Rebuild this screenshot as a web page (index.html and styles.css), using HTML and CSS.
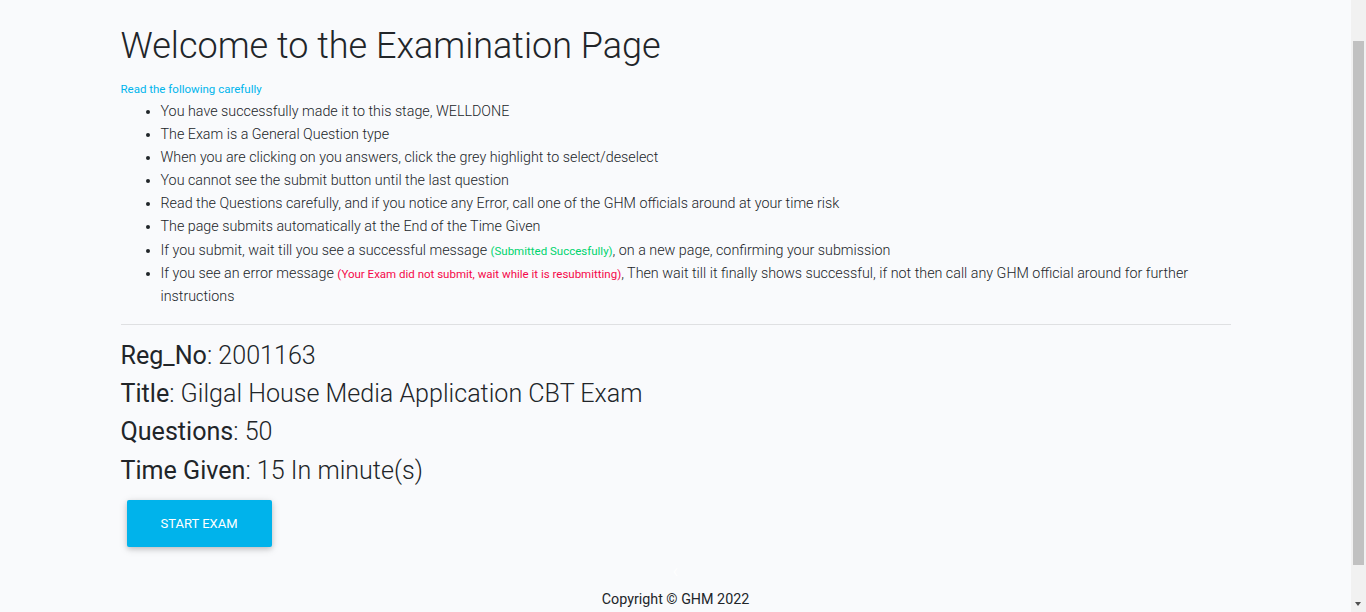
FILE: index.html
```html
<!DOCTYPE html>
<html lang="en">
<head>
<meta charset="utf-8">
<title>Examination Page</title>
<link rel="stylesheet" href="styles.css">
</head>
<body>
<main class="container">
  <h1 class="title">Welcome to the Examination Page</h1>
  <p class="note">Read the following carefully</p>
  <ul class="rules">
    <li>You have successfully made it to this stage, WELLDONE</li>
    <li>The Exam is a General Question type</li>
    <li>When you are clicking on you answers, click the grey highlight to select/deselect</li>
    <li>You cannot see the submit button until the last question</li>
    <li>Read the Questions carefully, and if you notice any Error, call one of the GHM officials around at your time risk</li>
    <li>The page submits automatically at the End of the Time Given</li>
    <li>If you submit, wait till you see a successful message <span class="ok">(Submitted Succesfully)</span>, on a new page, confirming your submission</li>
    <li>If you see an error message <span class="err">(Your Exam did not submit, wait while it is resubmitting)</span>, Then wait till it finally shows successful, if not then call any GHM official around for further instructions</li>
  </ul>
  <hr class="rule">
  <div class="info">
    <p><span class="lbl">Reg_No</span>: 2001163</p>
    <p><span class="lbl">Title</span>: Gilgal House Media Application CBT Exam</p>
    <p><span class="lbl">Questions</span>: 50</p>
    <p><span class="lbl">Time Given</span>: 15 In minute(s)</p>
  </div>
  <button class="btn" type="button">START EXAM</button>
</main>
<div class="chev">&#8249;</div>
<footer class="foot">Copyright © GHM 2022</footer>
<div class="sbar" aria-hidden="true">
  <div class="sbar-thumb"></div>
  <div class="sbar-arrow"></div>
</div>
</body>
</html>
```

FILE: styles.css
```css
html, body {
  margin: 0;
  padding: 0;
}
body {
  background: #f9fafc;
  color: #212529;
  font-family: Roboto, "Noto Sans", sans-serif;
  font-weight: 300;
  padding-right: 15px;
}
.container {
  max-width: 1110px;
  margin: 0 auto;
  padding: 0 15px;
}
.title {
  font-size: 36px;
  font-weight: 300;
  line-height: 48px;
  margin: 22px 0 0;
}
.note {
  color: #00b5ec;
  font-size: 11.5px;
  font-weight: 400;
  margin: 11px 0 3px;
  line-height: 16px;
}
.rules {
  margin: 0;
  padding-left: 40px;
  font-size: 14.3px;
  line-height: 23.1px;
}
.ok, .err {
  font-size: 11.5px;
  font-weight: 400;
  line-height: 1;
}
.ok {
  color: #00d46e;
}
.err {
  color: #f5084a;
}
.rule {
  border: 0;
  border-top: 1px solid rgba(0,0,0,.1);
  margin: 16px 0 12px;
}
.info p {
  margin: 0;
  font-size: 25.1px;
  line-height: 38.3px;
}
.lbl {
  font-weight: 400;
}
.btn {
  margin: 10px 6px 6px;
  background: #00b3eb;
  color: #fff;
  border: 0;
  border-radius: 2px;
  padding: 14px 34px;
  font-family: Roboto, sans-serif;
  font-weight: 400;
  font-size: 13px;
  line-height: 19px;
  box-shadow: 0 2px 5px 0 rgba(0,0,0,.16), 0 2px 10px 0 rgba(0,0,0,.12);
}
.chev {
  text-align: center;
  color: #fff;
  font-size: 20px;
  line-height: 20px;
  margin-top: 8px;
}
.foot {
  text-align: center;
  font-size: 14.3px;
  font-weight: 400;
  color: #212529;
  margin-top: 10px;
}
.sbar {
  position: fixed;
  top: 0;
  right: 0;
  width: 15px;
  height: 100%;
  background: #f1f1f1;
}
.sbar-thumb {
  position: absolute;
  top: 41px;
  left: 2px;
  width: 11px;
  height: 524px;
  background: #c1c1c1;
}
.sbar-arrow {
  position: absolute;
  bottom: 6px;
  left: 4px;
  width: 0;
  height: 0;
  border-left: 3.5px solid transparent;
  border-right: 3.5px solid transparent;
  border-top: 4px solid #505050;
}
```
